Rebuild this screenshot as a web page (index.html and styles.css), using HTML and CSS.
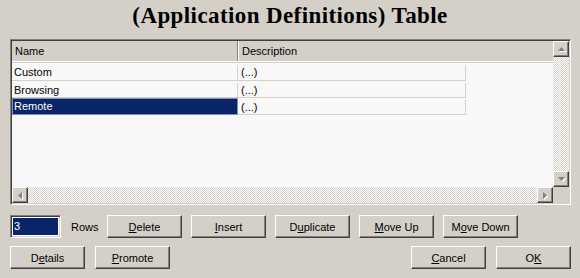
FILE: index.html
```html
<!DOCTYPE html>
<html lang="en">
<head>
    <meta charset="UTF-8">
    <title>(Application Definitions) Table</title>
    <link rel="stylesheet" href="styles.css">
</head>
<body>
    <h1 class="title">(Application Definitions) Table</h1>

    <div class="table-box">
        <div class="view">
            <div class="header">
                <div class="col col-name">Name</div>
                <div class="col col-desc">Description</div>
            </div>
            <div class="rows">
                <div class="row">
                    <div class="cell cell-name">Custom</div>
                    <div class="cell cell-desc">(...)</div>
                </div>
                <div class="row">
                    <div class="cell cell-name">Browsing</div>
                    <div class="cell cell-desc">(...)</div>
                </div>
                <div class="row selected">
                    <div class="cell cell-name">Remote</div>
                    <div class="cell cell-desc">(...)</div>
                </div>
            </div>
        </div>

        <!-- vertical scroll bar -->
        <div class="vscroll">
            <div class="arrow">
                <svg width="7" height="4" viewBox="0 0 7 4"><polygon points="3.5,0 7,4 0,4" fill="#808080"/></svg>
            </div>
            <div class="track"></div>
            <div class="arrow">
                <svg width="7" height="4" viewBox="0 0 7 4"><polygon points="0,0 7,0 3.5,4" fill="#808080"/></svg>
            </div>
        </div>

        <!-- horizontal scroll bar -->
        <div class="hscroll">
            <div class="arrow">
                <svg width="4" height="7" viewBox="0 0 4 7"><polygon points="4,0 4,7 0,3.5" fill="#808080"/></svg>
            </div>
            <div class="track"></div>
            <div class="arrow">
                <svg width="4" height="7" viewBox="0 0 4 7"><polygon points="0,0 4,3.5 0,7" fill="#808080"/></svg>
            </div>
        </div>
        <div class="corner"></div>
    </div>

    <div class="bar bar-top">
        <div class="rows-field"><span class="sel">3</span></div>
        <span class="rows-label">Rows</span>
        <button class="btn"><u>D</u>elete</button>
        <button class="btn"><u>I</u>nsert</button>
        <button class="btn">D<u>u</u>plicate</button>
        <button class="btn"><u>M</u>ove Up</button>
        <button class="btn">M<u>o</u>ve Down</button>
    </div>

    <div class="bar bar-bottom">
        <button class="btn">D<u>e</u>tails</button>
        <button class="btn"><u>P</u>romote</button>
        <div class="spacer"></div>
        <button class="btn"><u>C</u>ancel</button>
        <button class="btn">O<u>K</u></button>
    </div>
</body>
</html>
```

FILE: styles.css
```css
body {
    margin: 0;
    width: 580px;
    height: 278px;
    background-color: #d4d0c8;
    font-family: "Liberation Sans", Arial, sans-serif;
    font-size: 11px;
    color: #000;
    overflow: hidden;
}

.title {
    margin: 0;
    height: 39px;
    padding-top: 3px;
    box-sizing: border-box;
    text-align: center;
    font-family: "Liberation Serif", "Times New Roman", serif;
    font-size: 23px;
    font-weight: bold;
    letter-spacing: 0.4px;
    line-height: 25px;
}

/* sunken list box */
.table-box {
    margin-left: 10px;
    width: 561px;
    height: 166px;
    box-sizing: border-box;
    border-top: 1px solid #808080;
    border-left: 1px solid #808080;
    border-right: 1px solid #fff;
    border-bottom: 1px solid #fff;
    box-shadow: inset 1px 1px 0 #404040, inset -1px -1px 0 #d4d0c8;
    padding: 1px;
    display: grid;
    grid-template-columns: 1fr 16px;
    grid-template-rows: 1fr 16px;
}

.view {
    background-color: #f8f8f8;
    overflow: hidden;
}

.header {
    display: flex;
    height: 20px;
    background-color: #d4d0c8;
    border-bottom: 1px solid #fff;
    box-shadow: 0 1px 0 #d4d0c8;
}

.col {
    padding: 4px 0 0 3px;
    box-sizing: border-box;
}

.col-name {
    width: 226px;
    border-right: 1px solid #808080;
    box-shadow: 1px 0 0 #fff;
}

.col-desc {
    padding-left: 4px;
}

.rows {
    padding-top: 2px;
}

.row {
    display: flex;
    height: 17px;
}

.cell {
    height: 15px;
    margin-top: 2px;
    box-sizing: border-box;
    line-height: 14px;
    padding-left: 2px;
    border-bottom: 1px solid #d4d0c8;
}

.cell-name {
    width: 226px;
    border-right: 1px solid #d4d0c8;
}

.cell-desc {
    width: 228px;
    border-right: 1px solid #d4d0c8;
    padding-left: 3px;
}

.row:first-child .cell {
    margin-top: 1px;
    height: 16px;
    line-height: 15px;
}

.selected .cell-name {
    margin-top: 0;
    height: 17px;
    line-height: 17px;
    background-color: #0a246a;
    color: #fff;
    outline: 1px solid #8090b8;
    outline-offset: -1px;
}

/* scroll bars */
.vscroll {
    grid-row: 1;
    grid-column: 2;
    display: flex;
    flex-direction: column;
}

.hscroll {
    grid-row: 2;
    grid-column: 1;
    display: flex;
}

.track {
    flex: 1;
    background: repeating-conic-gradient(#d4d0c8 0 25%, #fff 0 50%) 0 0 / 2px 2px;
}

.arrow {
    width: 16px;
    height: 16px;
    box-sizing: border-box;
    background-color: #d4d0c8;
    border-top: 1px solid #fff;
    border-left: 1px solid #fff;
    border-right: 1px solid #404040;
    border-bottom: 1px solid #404040;
    box-shadow: inset -1px -1px 0 #808080;
    display: flex;
    align-items: center;
    justify-content: center;
}

.arrow svg {
    filter: drop-shadow(1px 1px 0 #fff);
}

.corner {
    background-color: #d4d0c8;
}

/* button rows */
.bar {
    display: flex;
    align-items: center;
    margin-left: 10px;
    width: 561px;
}

.bar-top {
    margin-top: 10px;
    gap: 9px;
}

.bar-bottom {
    margin-top: 8px;
    gap: 10px;
}

.spacer {
    flex: 1;
}

.rows-field {
    width: 51px;
    height: 23px;
    box-sizing: border-box;
    background-color: #fff;
    border-top: 1px solid #808080;
    border-left: 1px solid #808080;
    border-right: 1px solid #fff;
    border-bottom: 1px solid #fff;
    box-shadow: inset 1px 1px 0 #404040, inset -1px -1px 0 #d4d0c8;
    padding: 2px;
    display: flex;
}

.sel {
    flex: 1;
    background-color: #0a246a;
    color: #fff;
    line-height: 17px;
    padding-left: 1px;
}

.rows-label {
    width: 28px;
    padding-left: 1px;
    box-sizing: border-box;
}

.btn {
    width: 75px;
    height: 23px;
    padding: 0;
    font-family: inherit;
    font-size: 11px;
    color: #000;
    background-color: #d4d0c8;
    border-top: 1px solid #fff;
    border-left: 1px solid #fff;
    border-right: 1px solid #404040;
    border-bottom: 1px solid #404040;
    box-shadow: inset -1px -1px 0 #808080;
    cursor: pointer;
}
```
